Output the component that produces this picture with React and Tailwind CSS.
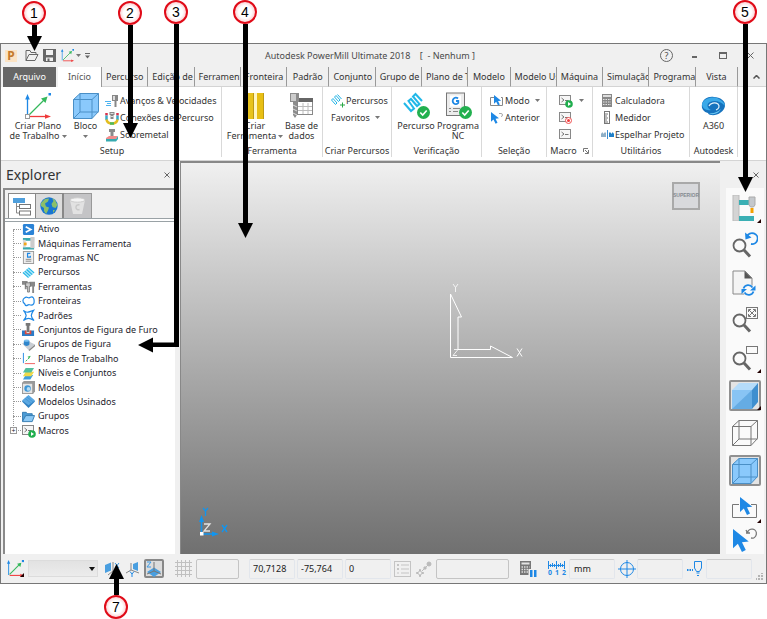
import React from 'react'

const BLUE = '#1e88e5'

/* ---------- shared bits ---------- */

const Caret = ({ className = '' }) => (
  <svg width="5" height="3" viewBox="0 0 5 3" className={`inline-block shrink-0 ${className}`}>
    <path d="M0 0h5L2.5 3z" fill="#777" />
  </svg>
)

const AxesIcon = ({ size = 26 }) => (
  <svg width={size} height={size} viewBox="0 0 26 26" fill="none">
    <path d="M2.5 22V5" stroke={BLUE} strokeWidth="1.3" />
    <path d="M2.5 1l2.300 5.500H.2z" fill={BLUE} />
    <path d="M4 22L19 7" stroke="#35b85c" strokeWidth="1.3" />
    <path d="M22.500 3.500l-2 6.500-4.500-4.500z" fill="#35b85c" />
    <path d="M5 23.500h16" stroke="#ef3b3b" strokeWidth="1.3" />
    <path d="M26 23.500l-6-2.300v4.600z" fill="#ef3b3b" />
    <rect x=".5" y="21.500" width="4" height="4" fill="#fff" stroke="#999" />
    <rect x="23.500" y="0" width="2.500" height="2.500" fill={BLUE} />
  </svg>
)

const SmallAxesIcon = ({ size }) => (
  <svg width={size} height={size} viewBox="0 0 16 16" fill="none">
    <path d="M1.500 14V2" stroke="#3d9be6" />
    <path d="M1.500 0L3 3.500H0z" fill={BLUE} />
    <path d="M2.500 13.500l10-10" stroke="#35b85c" />
    <path d="M13.500 2.500l-1 4-3-3z" fill="#35b85c" />
    <path d="M2.500 14.500H13" stroke="#ef3b3b" />
    <path d="M16 14.500L12.500 13v3z" fill="#ef3b3b" />
    <path d="M14 0h2v2h-2z" fill={BLUE} />
  </svg>
)

const CubeIcon = ({ size = 26, fill = '#8ac9fc', stroke = '#4a8fc6' }) => (
  <svg width={size} height={size} viewBox="0 0 26 26" fill="none" stroke={stroke}>
    <path d="M.5 6.500L7 .5h18.500v18l-6.500 7H.5z" fill={fill} />
    <path d="M.5 6.500H19v19M19 6.500L25.500.5M7 .5v18.500h18.500M7 19L.5 25.500" />
  </svg>
)

const SolidCubeIcon = () => (
  <svg width="26" height="26" viewBox="0 0 26 26">
    <path d="M0 7L7 0h19l-6 7z" fill="#b5dcfa" />
    <path d="M20 7l6-7v19l-6 7z" fill="#3f8fcf" />
    <path d="M0 7h20v19H0z" fill="#88c4f4" />
    <path d="M20 7v19H0z" fill="#65ace4" />
  </svg>
)

const Check = () => (
  <>
    <circle cx="20.500" cy="20.500" r="6.500" fill="#22b04f" />
    <path d="M17.300 20.500l2.400 2.500 4-4.500" stroke="#fff" strokeWidth="1.600" fill="none" />
  </>
)

const ConsoleIcon = ({ mark }) => (
  <svg width="15" height="14" viewBox="0 0 15 14" fill="none">
    <rect x=".5" y="1.500" width="11" height="9" fill="#f6f6f6" stroke="#888" />
    <path d="M2.500 4l2.500 2-2.500 2M6 6.500h3.500" stroke="#777" />
    {mark === 'run' && (
      <>
        <circle cx="10" cy="10" r="3.800" fill="#1fae4d" />
        <path d="M9 8v4l3-2z" fill="#fff" />
      </>
    )}
    {mark === 'record' && (
      <>
        <circle cx="9.500" cy="9.500" r="3" fill="#fff" stroke="#f05050" />
        <circle cx="9.500" cy="9.500" r="1.500" fill="#f03c3c" />
      </>
    )}
  </svg>
)

const Pointer = ({ x = 0, y = 0, s = 1 }) => (
  <path transform={`translate(${x} ${y}) scale(${s})`} d="M0 0v15l3.800-3.500 3.200 6.500 3-1.500-3-6.200 5.300-.6z" fill={BLUE} />
)

/* ---------- title bar ---------- */

const TitleBar = () => (
  <header className="flex h-[23px] items-center bg-[#f0f0f0] pl-[4px] text-[#4a4a4a]">
    <span className="flex h-[12px] w-[12px] items-center justify-center bg-[#fbe3c4] text-[12px] font-bold leading-[12px] text-[#c47a2c]">P</span>
    <button aria-label="Abrir" className="ml-[8px]">
      <svg width="14" height="13" viewBox="0 0 14 13" fill="none" stroke="#666">
        <path d="M1 11.500V1.500h4l1 2h5v2M1 11.500l3-6h9l-3 6z" />
      </svg>
    </button>
    <button aria-label="Salvar" className="ml-[4px]">
      <svg width="13" height="13" viewBox="0 0 13 13">
        <path d="M0 0h13v13H1.500L0 11.500z" fill="#666" />
        <path d="M3 1h7v5H3zM3 8.500h7V12H3z" fill="#f0f0f0" />
        <path d="M4.500 9.500h2V12h-2z" fill="#666" />
      </svg>
    </button>
    <button aria-label="Plano de trabalho" className="ml-[5px] flex items-center gap-[2px]">
      <SmallAxesIcon size={13} />
      <Caret />
    </button>
    <button aria-label="Personalizar" className="ml-[4px]">
      <svg width="5" height="6" viewBox="0 0 5 6" fill="#666"><path d="M0 0h5v1H0zM0 2.500h5L2.500 5.500z" /></svg>
    </button>
    <h1 className="flex-1 whitespace-pre pl-[76px] text-center text-[9px]">Autodesk PowerMill Ultimate 2018{'    '}[  - Nenhum ]</h1>
    <div className="flex w-[192px] items-center justify-end pr-[12px]">
      <button aria-label="Ajuda" className="flex h-[13px] w-[13px] items-center justify-center rounded-full border border-[#666] text-[9px]">?</button>
      <button aria-label="Minimizar" className="ml-[19px] mt-[3px] h-[2px] w-[5px] bg-[#666]" />
      <button aria-label="Maximizar" className="ml-[22px] h-[7px] w-[8px] border border-t-2 border-[#666]" />
      <button aria-label="Fechar" className="ml-[20px]">
        <svg width="7" height="7" viewBox="0 0 7 7" stroke="#666"><path d="M.5.5l6 6M6.500.5l-6 6" /></svg>
      </button>
    </div>
  </header>
)

const tabs = [
  'Percurso', 'Edição de', 'Ferramenta', 'Fronteira', 'Padrão', 'Conjunto', 'Grupo de',
  'Plano de T', 'Modelo', 'Modelo Us', 'Máquina', 'Simulação', 'Programa', 'Vista',
]

const centered = ['Padrão', 'Modelo', 'Vista']

const TabRow = () => (
  <nav className="flex h-[20px] bg-[#f0f0f0] pl-[2px] text-[9px] text-[#333]">
    <button className="w-[53px] bg-[#666] text-white">Arquivo</button>
    <button className="ml-[2px] w-[44px] border-r border-[#999] bg-white text-[#555]">Início</button>
    <div className="flex min-w-0 flex-1">
      {tabs.map((t) => (
        <button
          key={t}
          className={`min-w-0 flex-1 overflow-hidden whitespace-nowrap border-r border-b border-r-[#999] border-b-[#d4d4d4] ${
            centered.includes(t) ? 'text-center' : 'pl-[4px] text-left'
          }`}
        >
          {t}
        </button>
      ))}
    </div>
    <button aria-label="Recolher" className="flex w-[28px] items-center justify-center border-b border-[#d4d4d4] pl-[8px]">
      <svg width="7" height="4" viewBox="0 0 7 4" fill="none" stroke="#555" strokeWidth="1.500"><path d="M.5 3.500l3-3 3 3" /></svg>
    </button>
  </nav>
)

/* ---------- ribbon ---------- */

const Group = ({ label, children, launcher }) => (
  <section className="flex min-w-0 flex-col border-r border-[#d9d9d9] pt-[5px]">
    <div className="flex h-[53px] whitespace-nowrap">{children}</div>
    <div className="flex h-[12px] items-center justify-center whitespace-nowrap">
      {label}
      {launcher && (
        <button aria-label="Opções" className="ml-[6px]">
          <svg width="6" height="6" viewBox="0 0 6 6" fill="none" stroke="#777"><path d="M.5 4V.5H5M2 2l3 3M5.500 2v3.500H2" /></svg>
        </button>
      )}
    </div>
  </section>
)

const BigButton = ({ icon, lines, caret, className = '' }) => (
  <button className={`flex flex-col items-center ${className}`}>
    <span className="flex h-[27px] items-center">{icon}</span>
    {lines.map((l, i) => (
      <span key={l} className={`flex items-center gap-[2px] leading-[10px] ${i === 0 ? 'mt-[2px]' : ''}`}>
        {l}
        {caret && i === lines.length - 1 && <Caret />}
      </span>
    ))}
  </button>
)

const SmallButton = ({ icon, label, caret, aria }) => (
  <button aria-label={aria} className="flex h-[17px] items-center gap-px leading-[12px]">
    {icon}
    {label && <span>{label}</span>}
    {caret && <Caret className="ml-[4px]" />}
  </button>
)

const feedIcon = (
  <svg width="14" height="14" viewBox="0 0 14 14">
    <path d="M7 1h6v6h-1.500v6H9.500V7H7z" fill="#888" />
    <path d="M8 2h2v4H8z" fill="#ddd" />
    <path d="M0 7h6v1H0zM2 9h4v1H2zM1 11h5v1H1z" fill="#4db3f0" />
  </svg>
)

const linksIcon = (
  <svg width="14" height="14" viewBox="0 0 14 14" fill="none">
    <path d="M1.500 2v2.500M12.500 2v2.500" stroke="#d8324a" strokeWidth="2.500" />
    <path d="M1.500 4.500V9M12.500 4.500V9" stroke="#38a9c9" strokeWidth="2.500" />
    <path d="M1.500 8.500c.5 3 2.500 4 5.500 4s5-1 5.500-4" stroke="#e2bd20" strokeWidth="2.500" />
    <path d="M5 12.500h4" stroke="#4db860" strokeWidth="2.500" />
    <path d="M4.500 1h5v3h-1v4h-3V4h-1z" fill="#888" />
    <path d="M5.500 2.500h3M5.500 5.500h3" stroke="#ddd" />
  </svg>
)

const stockIcon = (
  <svg width="14" height="14" viewBox="0 0 14 14">
    <path d="M4 1h6v3H8.500v5h-3V4H4z" fill="#8a8a8a" />
    <path d="M1 10l3-2h9l-2 3H1z" fill="#f08c8c" />
    <path d="M1 11h10l2-3v3l-2 2.500H1z" fill="#35aab0" />
  </svg>
)

const toolIcon = (
  <svg width="18" height="26" viewBox="0 0 18 26">
    <path d="M0 0h7v26H0z" fill="#e8c31c" />
    <path d="M7 0h4v26H7z" fill="#fff6c4" />
    <path d="M11 0h7v26h-7z" fill="#e8bf14" />
    <path d="M7.500 0v26M17.500 0v26" stroke="#bd9a14" />
  </svg>
)

const databaseIcon = (
  <svg width="25" height="25" viewBox="0 0 25 25" fill="none">
    <rect x="8.500" y="7.500" width="15" height="14" fill="#fff" stroke="#888" />
    <path d="M8 5h16v4H8z" fill="#666" />
    <path d="M9 13.500h14M9 17.500h14M14 10v11M19 10v11" stroke="#bbb" />
    <path d="M1 0h9v9H8v13l-2 3-2-3V9H1z" fill="#8c8c8c" />
    <path d="M2 1h5v7H2z" fill="#ccc" />
    <path d="M4 12l4 2M4 16l4 2M4 20l4 2" stroke="#ddd" />
  </svg>
)

const pathIcon = (
  <svg width="14" height="14" viewBox="0 0 14 14" fill="none">
    <path d="M.5 6l4 4.500M2 4.500l4 4.500M3.500 3l4 4.500M5 1.500l4 4.500M6.500.5l4 4.500M.5 6L2 4.500M4.500 10.500L6 9M3.500 3L5 1.500M7.500 7.500L9 6" stroke="#22b4e6" />
    <path d="M11.500 8.500v5M9 11h5" stroke="#28a745" />
  </svg>
)

const verifyPathIcon = (
  <svg width="27" height="27" viewBox="0 0 27 27" fill="none">
    <path d="M1 11l7 8 3-2.500L5.500 9 8 7l6 7 2.500-2L10 4.500 12.500 2l6.500 7" stroke="#22b8e8" strokeWidth="2" />
    <Check />
  </svg>
)

const verifyNcIcon = (
  <svg width="27" height="27" viewBox="0 0 27 27" fill="none">
    <rect x="1.500" y="1" width="18" height="22.500" fill="#ececec" stroke="#777" />
    <rect x="5" y="3.500" width="11" height="11" fill="#fff" />
    <path d="M13 6.500A3.200 3.200 0 1 0 13.300 11V9H11" stroke={BLUE} strokeWidth="1.800" />
    <path d="M4 16.500h2M8 16.500h7M4 19.500h2M8 19.500h5" stroke="#888" />
    <Check />
  </svg>
)

const cloudIcon = (
  <svg width="25" height="20" viewBox="0 0 25 20">
    <path d="M1 8C2 3 7 0 13 1c6 0 12 4 11 9-1 6-8 10-14 9-1 0-3-1-3-2C3 16 0 13 1 8z" fill="#1673be" />
    <path d="M1 8C3 2 12 0 18 3c4 2 6 5 6 7-4-5-11-6-15-4-4 2-3 6 1 8-5 1-9-2-9-6z" fill="#3aa9e8" />
    <path d="M8 10c1-3 6-4 9-2 2 2 1 5-2 6" fill="none" stroke="#e8f5fd" strokeWidth="1.200" />
    <path d="M8 17c4 1 9-1 12-4-2 4-8 7-12 4z" fill="#6cc6f2" />
  </svg>
)

const modeIcon = (
  <svg width="14" height="14" viewBox="0 0 14 14">
    <path d="M4 3.500H.5v8h12v-8H11" fill="none" stroke="#888" />
    <Pointer x={4} y={1} s={0.58} />
  </svg>
)

const previousIcon = (
  <svg width="14" height="14" viewBox="0 0 14 14">
    <Pointer x={1} y={1} s={0.65} />
    <path d="M9 2.500h2a1.500 1.500 0 0 1 0 3" fill="none" stroke="#aaa" />
  </svg>
)

const calculatorIcon = (
  <svg width="13" height="13" viewBox="0 0 13 13">
    <path d="M1 0h10v13H1z" fill="#888" />
    <path d="M2 1h8v2H2z" fill="#ddd" />
    <path d="M2 5.500h8M2 8h8M2 10.500h8" stroke="#e4e4e4" strokeDasharray="1.500 1" />
  </svg>
)

const rulerIcon = (
  <svg width="13" height="13" viewBox="0 0 13 13" fill="none" stroke="#777">
    <rect x="3.500" y=".5" width="5" height="12" />
    <path d="M4 3h3M4 5h2M4 7h3M4 9h2M4 11h3" />
  </svg>
)

const mirrorIcon = (
  <svg width="13" height="9" viewBox="0 0 13 9">
    <path d="M0 4l1-1.500h1V4l1.500-1.500H5V7H0z" fill="#8fb0c8" />
    <path d="M6.500 0v9" stroke="#3c8fd4" />
    <path d="M8 2.500h1.500L11 4V2.500h1L13 4v3H8z" fill="#1e7fc8" />
  </svg>
)

const Ribbon = () => (
  <div className="grid grid-cols-[219fr_101fr_69fr_90fr_65fr_46fr_97fr_48fr_28fr] border-b border-[#d4d4d4] bg-white pb-[3px] pl-[2px] text-[9px] text-[#333]">
    <Group label="Setup">
      <BigButton className="ml-[6px] w-[58px]" icon={<AxesIcon />} lines={['Criar Plano', 'de Trabalho']} caret />
      <div className="flex w-[37px] flex-col items-center">
        <BigButton icon={<CubeIcon />} lines={['Bloco']} />
        <Caret className="mt-[4px]" />
      </div>
      <div className="ml-px flex flex-col">
        <SmallButton icon={feedIcon} label="Avanços & Velocidades" />
        <SmallButton icon={linksIcon} label="Conexões de Percurso" />
        <SmallButton icon={stockIcon} label="Sobremetal" />
      </div>
    </Group>
    <Group label="Ferramenta">
      <BigButton className="ml-[4px] w-[58px]" icon={toolIcon} lines={['Criar', 'Ferramenta']} caret />
      <BigButton className="w-[35px]" icon={databaseIcon} lines={['Base de', 'dados']} />
    </Group>
    <Group label="Criar Percursos">
      <div className="ml-[8px] flex flex-col">
        <SmallButton icon={pathIcon} label="Percursos" />
        <SmallButton label="Favoritos" caret />
      </div>
    </Group>
    <Group label="Verificação">
      <BigButton className="ml-[3px] w-[42px]" icon={verifyPathIcon} lines={['Percurso']} />
      <BigButton className="w-[42px]" icon={verifyNcIcon} lines={['Programa', 'NC']} />
    </Group>
    <Group label="Seleção">
      <div className="ml-[8px] flex flex-col">
        <SmallButton icon={modeIcon} label="Modo" caret />
        <SmallButton icon={previousIcon} label="Anterior" />
      </div>
    </Group>
    <Group label="Macro" launcher>
      <div className="ml-[12px] flex flex-col">
        <SmallButton aria="Executar macro" icon={<ConsoleIcon mark="run" />} caret />
        <SmallButton aria="Gravar macro" icon={<ConsoleIcon mark="record" />} />
        <SmallButton aria="Eco de comandos" icon={<ConsoleIcon />} />
      </div>
    </Group>
    <Group label="Utilitários">
      <div className="ml-[8px] flex flex-col">
        <SmallButton icon={calculatorIcon} label="Calculadora" />
        <SmallButton icon={rulerIcon} label="Medidor" />
        <SmallButton icon={mirrorIcon} label="Espelhar Projeto" />
      </div>
    </Group>
    <Group label="Autodesk">
      <BigButton className="w-full" icon={cloudIcon} lines={['A360']} />
    </Group>
  </div>
)

/* ---------- explorer ---------- */

const svg14 = (children) => (
  <svg width="13" height="13" viewBox="0 0 14 14" fill="none">{children}</svg>
)

const tree = [
  ['Ativo', svg14(<><rect x="1" y="1" width="12" height="12" rx="1.500" fill="#2b83d6" /><path d="M4 4l5.500 3L4 10" stroke="#fff" strokeWidth="1.800" /></>)],
  ['Máquinas Ferramenta', svg14(<><path d="M1 1h12v3H1zM1 11h12v2.500H1z" fill="#38a9ae" /><path d="M1 3h3v8H1z" fill="#d9d9d9" /><path d="M9 0h4.500v12H9z" fill="#ccc" /><path d="M2 6h3v3H2z" fill="#f2a71b" /></>)],
  ['Programas NC', svg14(<><rect x="1.500" y=".5" width="11" height="13" fill="#eee" stroke="#999" /><path d="M9 2.500H6v4h3V5" stroke={BLUE} strokeWidth="1.300" /><path d="M4 9h6M4 11h6" stroke="#888" /></>)],
  ['Percursos', svg14(<><path d="M1 7l6-5.500L13.500 7 7.500 12.500z" fill="#b0e8fa" /><path d="M1 7l6 5.500M3 5.500l6 5.500M5 3.800l6 5.500M7 2l6 5.500" stroke="#22b4e6" strokeWidth="1.200" /></>)],
  ['Ferramentas', svg14(<><path d="M0 1h6v4H5v5H3V5H0zM8 2h6v5h-1v7h-2V7H8z" fill="#888" /><path d="M4 3h5v4H8v6H6V7H4z" fill="#ccc" stroke="#666" strokeWidth=".8" /></>)],
  ['Fronteiras', svg14(<path d="M3 3c2-1.500 3 0 4.500 0S9 2 10.500 2 13 4 13 5.500s.5 2.500-.5 4-3 1.500-4.500 1-2 1-3.500 1-1-2-2-2.500S1 7.500 1 6s1-2.500 2-3z" stroke={BLUE} strokeWidth="1.300" />)],
  ['Padrões', svg14(<path d="M1.500 1.500Q4 3.500 5.500 3.500T12.500 1.500Q10 5 10 7t3 5.500Q9 10 7 10t-5.500 2.500Q4.500 9 4.500 7T1.500 1.500z" stroke={BLUE} strokeWidth="1.300" />)],
  ['Conjuntos de Figura de Furo', svg14(<><path d="M0 8h4v3h5V8h4v6H0z" fill="#2b7cc8" /><path d="M3 8h2v3h3V8h2v4H3z" fill="#e34a3a" /><path d="M4 0h5v3H8v7H5V3H4z" fill="#777" /></>)],
  ['Grupos de Figura', svg14(<><path d="M0 6l6-3 8 4-7 6z" fill="#c9ced4" /><path d="M7 13l7-6v2l-6 5z" fill="#888" /><ellipse cx="5" cy="3" rx="3" ry="1.500" fill="#7cc0f0" /><path d="M2 3v4c1 2 5 2 6 0V3c-1 1.500-5 1.500-6 0z" fill="#2f86cc" /></>)],
  ['Planos de Trabalho', svg14(<><path d="M1.500 1v11" stroke={BLUE} /><path d="M4 10l5-5" stroke="#35b85c" strokeDasharray="2 1" /><path d="M9 4l-1 3-2-2z" fill="#35b85c" /><path d="M3 12.500h11" stroke="#ef5b5b" /></>)],
  ['Níveis e Conjuntos', svg14(<><path d="M4 8.500h8l-3 5H1z" fill="#3f9fdc" /><path d="M4 5h9l-3 5H1z" fill="#efd94a" /><path d="M4 1h9l-3 5H1z" fill="#52bf9c" /></>)],
  ['Modelos', svg14(<><path d="M0 2l2-2h12v11l-2 3H0z" fill="#999" /><path d="M1 3h10v10H1z" fill="#e4e4e4" /><circle cx="6" cy="8" r="3.500" fill="#3f97d6" /><circle cx="7" cy="8.500" r="2" fill="#b5dcf4" /></>)],
  ['Modelos Usinados', svg14(<><path d="M0 7l7-6.500L14 7l-7 7z" fill="#2f80c2" /><path d="M0 6l7-6 7 6-7 5z" fill="#5ba8e2" /><path d="M3 3.500l7 5.500M5 2l7 5.500" stroke="#3c8bcb" strokeWidth=".6" /></>)],
  ['Grupos', svg14(<><path d="M.5 12V2.500h4L6 4h5v2" fill="#4a9ad4" stroke="#3279b0" /><path d="M.5 12.500L4 6h9.500L11 12.500z" fill="#8cc8f4" stroke="#3279b0" /></>)],
  ['Macros', <ConsoleIcon mark="run" />],
]

const Explorer = () => (
  <aside className="flex w-[177px] shrink-0 flex-col bg-[#f0f0f0] pl-[2px] text-[9px] text-[#1c1c2c]">
    <div className="flex h-[27px] items-center justify-between pl-[3px] pr-[8px]">
      <h2 className="text-[14px] leading-[20px] text-[#333]">Explorer</h2>
      <button aria-label="Fechar painel">
        <svg width="6" height="6" viewBox="0 0 6 6" stroke="#666"><path d="M.5.5l5 5M5.500.5l-5 5" /></svg>
      </button>
    </div>
    <div className="mr-[3px] flex flex-1 flex-col border-t-2 border-l-2 border-[#8a8a8a] bg-white">
      <div className="h-[29px] border-b border-[#9aa2a6] bg-[#f2f2f2] pl-[3px] pt-[3px]">
        <div className="flex">
          <button aria-label="Árvore" className="flex h-[25px] w-[28px] items-center justify-center border border-b-0 border-[#888] bg-white">
            <svg width="19" height="19" viewBox="0 0 19 19" fill="none">
              <path d="M0 1h12v5H0z" fill="#4f9fdc" />
              <path d="M3.500 6v10H7M3.500 9.500H7" stroke="#888" />
              <rect x="6.500" y="7.500" width="11" height="4" fill="#fff" stroke="#777" />
              <rect x="6.500" y="14" width="11" height="4" fill="#fff" stroke="#777" />
            </svg>
          </button>
          <button aria-label="Navegador" className="flex h-[25px] w-[28px] items-center justify-center border-t border-r-2 border-[#888] bg-[#dcdcdc]">
            <svg width="18" height="18" viewBox="0 0 18 18">
              <circle cx="9" cy="9" r="8.700" fill="#1976d2" />
              <path d="M1 6l4-4 4-.5-1 3-3 2 1 3 3 1-1 3-2 3.500-2-3 0-3-3-2zM12 1l3 2 2.500 5-2 3-3-1-1-3 2-3zM13 13l2 0-2 3z" fill="#8bbf6a" />
            </svg>
          </button>
          <button aria-label="Lixeira" className="flex h-[25px] w-[28px] items-center justify-center border border-b-0 border-l-0 border-[#999] bg-[#c4c4c6]">
            <svg width="17" height="18" viewBox="0 0 17 18" fill="none">
              <path d="M1 3h15l-3 14H4z" fill="#e2e2e2" />
              <ellipse cx="8.500" cy="3" rx="7.500" ry="2.200" fill="#f4f4f4" stroke="#ccc" />
              <path d="M10.500 8a2.500 2.500 0 1 0 0 4.500" stroke="#c8c8c8" strokeWidth="1.400" />
            </svg>
          </button>
        </div>
      </div>
      <div className="h-[3px] border-b border-[#9aa2a6]" />
      <ul className="relative grid h-[216px] grid-rows-15 before:absolute before:top-[8px] before:bottom-[8px] before:left-[8px] before:border-l before:border-dotted before:border-[#999]">
        {tree.map(([name, icon]) => (
          <li key={name} className="relative flex min-h-0 items-center pl-[8px]">
            <span className="w-[8px] border-t border-dotted border-[#999]" />
            {name === 'Macros' && (
              <button aria-label="Expandir Macros" className="absolute left-[5px] flex h-[7px] w-[7px] items-center justify-center border border-[#999] bg-white text-[7px] leading-[5px]">+</button>
            )}
            <span className="ml-px flex w-[16px] shrink-0">{icon}</span>
            <span className="whitespace-nowrap leading-[12px]">{name}</span>
          </li>
        ))}
      </ul>
    </div>
  </aside>
)

/* ---------- graphics window ---------- */

const Viewport = () => (
  <main className="relative min-w-0 flex-1 border-t-2 border-l border-[#888] bg-linear-to-b from-[#f0f0f0] to-[#707070]">
    <button className="absolute top-[19px] right-[20px] flex h-[28px] w-[28px] items-center justify-center border-2 border-[#a9a9a9] bg-[#d8d9dc] font-['Liberation_Sans',sans-serif] text-[5px] font-bold text-[#858a91]">
      SUPERIOR
    </button>
    <svg width="76" height="80" viewBox="0 0 76 80" className="absolute top-[119px] left-1/2 -ml-[2px]" fill="none" stroke="#fff">
      <path d="M1.500 75.500V12l11 23h-3.500v32.500h32.500V64l22 11.500z" />
      <path d="M4 2l2.500 3.500L9 2M6.500 5.500V10" strokeWidth=".8" />
      <path d="M68 66.500l5 8M73 66.500l-5 8" />
      <path d="M5 67.500h4l-5 6h4" strokeWidth=".8" />
    </svg>
    <svg width="36" height="32" viewBox="0 0 36 32" className="absolute bottom-[15px] left-[17px]" fill="none" stroke="#1095f0">
      <path d="M3.500 26V12M5 27h13" strokeWidth="1.500" />
      <path d="M3.500 8l2.500 7H1zM21 27l-7-2.500v5z" fill="#1095f0" stroke="none" />
      <path d="M5 1l2.500 3L10 1M7.500 4v5M24 18l5 7M29 18l-5 7" strokeWidth="1.300" />
      <path d="M6 17h6l-6 7h6" stroke="#e4e4e4" strokeWidth="1.300" />
      <rect x="2" y="25" width="3.500" height="3.500" fill="#fff" stroke="none" />
    </svg>
  </main>
)

const Lens = () => (
  <>
    <circle cx="7.500" cy="13.500" r="6" stroke="#666" strokeWidth="1.800" />
    <path d="M12 18l6 6.500" stroke="#666" strokeWidth="3" />
  </>
)

const tools = [
  { name: 'Ver de cima', menu: true, icon: <><path d="M1 0h6v26H1z" fill="#d4d4d4" stroke="#bbb" /><path d="M7 5h11v5H7zM7 21h15v5H7z" fill="#3aafb4" /><path d="M17 2h6v8l-1.500 2h-3L17 10z" fill="#c4c8cc" stroke="#aaa" /><path d="M18.500 13h3v5h-3z" fill="#f5a000" /></> },
  { name: 'Última vista', icon: <><Lens /><path d="M15 4.500A5.500 5.500 0 1 1 19 12" stroke={BLUE} strokeWidth="1.800" /><path d="M13 .5l.5 7 6-2z" fill={BLUE} /></> },
  { name: 'Atualizar', icon: <><path d="M1 1h12l7 7v16H1z" fill="#f4f4f4" stroke="#888" /><path d="M12.500 1v7.500H20z" fill="#555" /><circle cx="16.500" cy="20" r="6" fill="#fafafa" /><path d="M11.500 18.500a5 5 0 0 1 9-1M21.500 21.500a5 5 0 0 1-9 1" stroke={BLUE} strokeWidth="1.800" /><path d="M23.500 15.500V20.500H18zM9.500 24v-5H15z" fill={BLUE} /></> },
  { name: 'Ajustar à tela', icon: <><Lens /><rect x="14.500" y=".5" width="11" height="11" fill="#fafafa" stroke="#777" /><path d="M17 3l6 6M23 3l-6 6" stroke="#777" /><path d="M16.500 5V2.500H19M21 2.500h2.500V5M23.500 7v2.500H21M19 9.500h-2.500V7" stroke="#777" /></> },
  { name: 'Zoom em caixa', menu: true, icon: <><Lens /><rect x="14.500" y="1.500" width="11" height="7" stroke="#777" fill="#fafafa" /></> },
  { name: 'Sombreado', menu: true, on: true, cube: <SolidCubeIcon /> },
  { name: 'Aramado', cube: <CubeIcon fill="none" stroke="#777" /> },
  { name: 'Bloco', on: true, cube: <CubeIcon /> },
  { name: 'Seleção por caixa', menu: true, icon: <><path d="M7 9.500H.5v13h24v-13H19" stroke="#777" fill="#fafafa" /><Pointer x={8} y={2} s={1} /></> },
]

const ViewToolbar = () => (
  <aside className="ml-[6px] flex w-[40px] shrink-0 flex-col bg-[#f0f0f0] pr-[2px]">
    <div className="flex h-[27px] items-center justify-end pr-[5px]">
      <button aria-label="Fechar barra">
        <svg width="6" height="6" viewBox="0 0 6 6" stroke="#666"><path d="M.5.5l5 5M5.500.5l-5 5" /></svg>
      </button>
    </div>
    <div className="flex flex-col items-center bg-[#fafafa] pt-px">
      <div className="grid h-[338px] grid-rows-9">
        {tools.map(({ name, icon, cube, on, menu }) => (
          <button key={name} aria-label={name} className="relative flex min-h-0 items-center justify-center">
            <span className={`flex h-[31px] w-[32px] items-center justify-center rounded-xs ${on ? 'border-2 border-[#909090] bg-[#e4e4e4]' : ''}`}>
              {cube || <svg width="26" height="26" viewBox="0 0 26 26" fill="none">{icon}</svg>}
            </span>
            {menu && (
              <svg width="4" height="4" viewBox="0 0 4 4" className="absolute right-0 bottom-[4px]"><path d="M4 0v4H0z" fill="#200" /></svg>
            )}
          </button>
        ))}
      </div>
      <button aria-label="Seleção anterior" className="h-[27px]">
        <svg width="26" height="26" viewBox="0 0 26 26" fill="none">
          <Pointer x={1} y={1} s={1.28} />
          <path d="M15 4l-1-2M14 5h4M15.500 4.500A4.500 4.500 0 1 1 19 10" stroke="#777" strokeWidth="1.300" />
        </svg>
      </button>
    </div>
  </aside>
)

/* ---------- status bar ---------- */

const Field = ({ label, value = '', className, frame }) => (
  <input
    aria-label={label}
    defaultValue={value}
    className={`h-[20px] min-w-0 rounded-xs border bg-[#f0f0f0] pl-[3px] text-[9px] text-[#222] ${
      frame ? 'border-[#c4c4c4]' : 'border-[#e2e6ec] border-t-[#cfcfcf]'
    } ${className}`}
  />
)

const PlaneIcon = ({ axis }) => (
  <svg width="16" height="16" viewBox="0 0 16 16" fill="none">
    {axis === 'x' && <><path d="M1 4l6-2.500v8L1 12z" fill="#4a9fe0" /><path d="M9 1v9M9 10l-5 4M9 10l4 4" stroke="#888" /><path d="M11 2l4 5M15 2l-4 5" stroke="#3c9be6" /></>}
    {axis === 'y' && <><path d="M8 3l5-2v9l-5-2z" fill="#4a9fe0" /><path d="M6 2v7M6 9l-5 3M6 9l8 3" stroke="#888" /><path d="M5 10.500L7 13l2-2.500M7 13v3" stroke={BLUE} /></>}
    {axis === 'z' && <><path d="M1 11l7-4.500 7 4.500-7 5z" fill="#4a9fe0" /><path d="M8 1v9M8 10l-7 3M8 10l7 3" stroke="#777" /><path d="M1 1h4L1 6h4" stroke="#3c9be6" /></>}
  </svg>
)

const StatusBar = () => (
  <footer className="flex h-[29px] items-center bg-[#f0f0f0] pl-[6px] pr-[3px]">
    <button aria-label="Criar plano de trabalho" className="relative">
      <SmallAxesIcon size={17} />
      <svg width="4" height="4" viewBox="0 0 4 4" className="absolute right-0 bottom-0"><path d="M4 0v4H0z" fill="#200" /></svg>
    </button>
    <div className="relative ml-[4px] flex w-[70px] items-center">
      <select aria-label="Plano de trabalho ativo" className="h-[17px] w-full appearance-none border border-[#dcdcdc] bg-linear-to-b from-[#e2e2e2] to-[#ececec] text-[9px]">
        <option></option>
      </select>
      <svg width="6" height="4" viewBox="0 0 6 4" className="pointer-events-none absolute right-[3px]"><path d="M0 0h6L3 4z" fill="#111" /></svg>
    </div>
    <button aria-label="Plano X" className="ml-[6px]"><PlaneIcon axis="x" /></button>
    <button aria-label="Plano Y" className="ml-[5px]"><PlaneIcon axis="y" /></button>
    <button aria-label="Plano Z" className="ml-[3px] flex h-[19px] w-[20px] items-center justify-center rounded-xs border-2 border-[#888] bg-[#dcdcdc]"><PlaneIcon axis="z" /></button>
    <button aria-label="Grade" className="ml-[11px]">
      <svg width="17" height="17" viewBox="0 0 17 17" stroke="#c0c0c0"><path d="M2.500 0v17M6.500 0v17M10.500 0v17M14.500 0v17M0 2.500h17M0 6.500h17M0 10.500h17M0 14.500h17" /></svg>
    </button>
    <Field label="Espaçamento" frame className="ml-[4px] w-[43px]" />
    <Field label="X" value="70,7128" className="ml-[10px] w-[46px]" />
    <Field label="Y" value="-75,764" className="ml-[2px] w-[46px]" />
    <Field label="Z" value="0" className="ml-[2px] w-[46px]" />
    <button aria-label="Entrada de posição" className="ml-[3px]">
      <svg width="17" height="16" viewBox="0 0 17 16" fill="none" stroke="#c4c4c4"><rect x=".5" y=".5" width="16" height="15" /><path d="M3 3l2 2M5 3L3 5M3 7l2 2M5 7L3 9M3 12h2M7 4h8M7 8h8M7 12h8" /></svg>
    </button>
    <button aria-label="Medir" className="ml-[5px]">
      <svg width="16" height="16" viewBox="0 0 16 16" fill="none" stroke="#bbb"><path d="M4 8l1 3 3 1-3 1-1 3-1-3-3-1 3-1zM6 10l7-7" /><circle cx="13" cy="3" r="2" fill="#bbb" /><circle cx="9" cy="7" r="1.200" fill="#bbb" /></svg>
    </button>
    <Field label="Distância" frame className="ml-[4px] w-[73px]" />
    <div className="min-w-0 flex-1" />
    <button aria-label="Calculadora">
      <svg width="17" height="17" viewBox="0 0 17 17"><path d="M0 1h11v14H0z" fill="#777" /><path d="M1.500 2.500h8v2h-8z" fill="#e4e4e4" /><path d="M1.500 7h8M1.500 9.500h8M1.500 12h8" stroke="#ddd" strokeWidth="1.400" strokeDasharray="1.500 1" /><path d="M8.500 9H17v8H8.500z" fill="#f0f0f0" /><path d="M10 10h2.500v7H10zM14 10h2.500v7H14z" fill={BLUE} /></svg>
    </button>
    <label htmlFor="units" className="ml-[11px] flex w-[18px] flex-col items-center text-[7px] font-bold leading-[8px] text-[#1e88e5]">
      <svg width="18" height="8" viewBox="0 0 18 8" fill="none" stroke={BLUE}><path d="M.5 0v8M8.500 0v8M16.500 0v8M2.500 3v3M4.500 2v4M6.500 3v3M10.500 3v3M12.500 2v4M14.500 3v3M0 4.500h17" /></svg>
      <span className="flex w-full justify-between"><span>0</span><span>1</span><span>2</span></span>
    </label>
    <input id="units" defaultValue="mm" className="ml-[3px] h-[20px] w-[46px] min-w-0 rounded-xs border border-[#e2e6ec] border-t-[#cfcfcf] bg-[#f0f0f0] pl-[4px] text-[9px] text-[#222]" />
    <svg width="18" height="18" viewBox="0 0 18 18" fill="none" stroke={BLUE} className="ml-[3px] shrink-0"><circle cx="9" cy="9" r="6.500" /><path d="M9 0v18M0 9h18" /></svg>
    <Field label="Tolerância" className="ml-px w-[46px]" />
    <svg width="16" height="17" viewBox="0 0 16 17" fill="none" stroke={BLUE} className="ml-[4px] shrink-0"><path d="M7.500 1.500h7V8l-2 3.500h-3L7.500 8zM9.500 13h3M10 15.500h2" /><path d="M0 10h6" strokeDasharray="1.500 1" strokeWidth="2" /></svg>
    <Field label="Espessura" className="ml-[3px] w-[46px]" />
    <svg width="7" height="7" viewBox="0 0 7 7" fill="#b4b4b4" className="ml-[4px] mt-[16px] shrink-0"><path d="M5 0h2v1H5zM5 2h2v2H5zM2 2h2v2H2zM5 5h2v2H5zM2 5h2v2H2zM0 5h1v2H0z" /></svg>
  </footer>
)

/* ---------- callouts ---------- */

const Badge = ({ n }) => (
  <span className="flex h-[24px] w-[24px] shrink-0 items-center justify-center rounded-full border-2 border-[#e00b18] bg-radial from-white from-45% to-[#f4a4aa] font-['Liberation_Sans',sans-serif] text-[14px] leading-[20px] text-black">
    {n}
  </span>
)

const Head = ({ up }) => (
  <svg width="15" height="15" viewBox="0 0 15 15" className="shrink-0"><path d={up ? 'M0 15h15L7.500 0z' : 'M0 0h15L7.500 15z'} /></svg>
)

const Callout = ({ n, className, stem }) => (
  <div className={`pointer-events-none absolute flex flex-col items-center ${className}`}>
    <Badge n={n} />
    <span className={`w-[5px] bg-black ${stem}`} />
    <Head />
  </div>
)

export default function App() {
  return (
    <div className="relative bg-white pt-[43px] pb-[35px] font-['Noto_Sans',sans-serif]">
      <div className="flex flex-col border border-[#777]">
        <TitleBar />
        <TabRow />
        <Ribbon />
        <div className="flex bg-[#f0f0f0]">
          <Explorer />
          <div className="ml-[2px] flex min-w-0 flex-1"><Viewport /></div>
          <ViewToolbar />
        </div>
        <StatusBar />
      </div>

      <Callout n="1" className="top-[1px] left-[22px]" stem="h-[11px]" />
      <Callout n="2" className="top-[1px] left-[118px]" stem="h-[98px]" />
      <Callout n="4" className="top-0 left-[233px]" stem="h-[199px]" />
      <Callout n="5" className="top-0 right-[10px]" stem="h-[153px]" />
      <div className="pointer-events-none absolute top-0 left-[138px] w-[50px]">
        <div className="flex justify-end"><Badge n="3" /></div>
        <svg width="50" height="329" viewBox="0 0 50 329"><path d="M36 0h5v323H15v5.500L0 321l15-7.500v5h21z" /></svg>
      </div>
      <div className="pointer-events-none absolute bottom-0 left-[104px] flex flex-col items-center">
        <Head up />
        <span className="h-[16px] w-[5px] bg-black" />
        <Badge n="7" />
      </div>
    </div>
  )
}
